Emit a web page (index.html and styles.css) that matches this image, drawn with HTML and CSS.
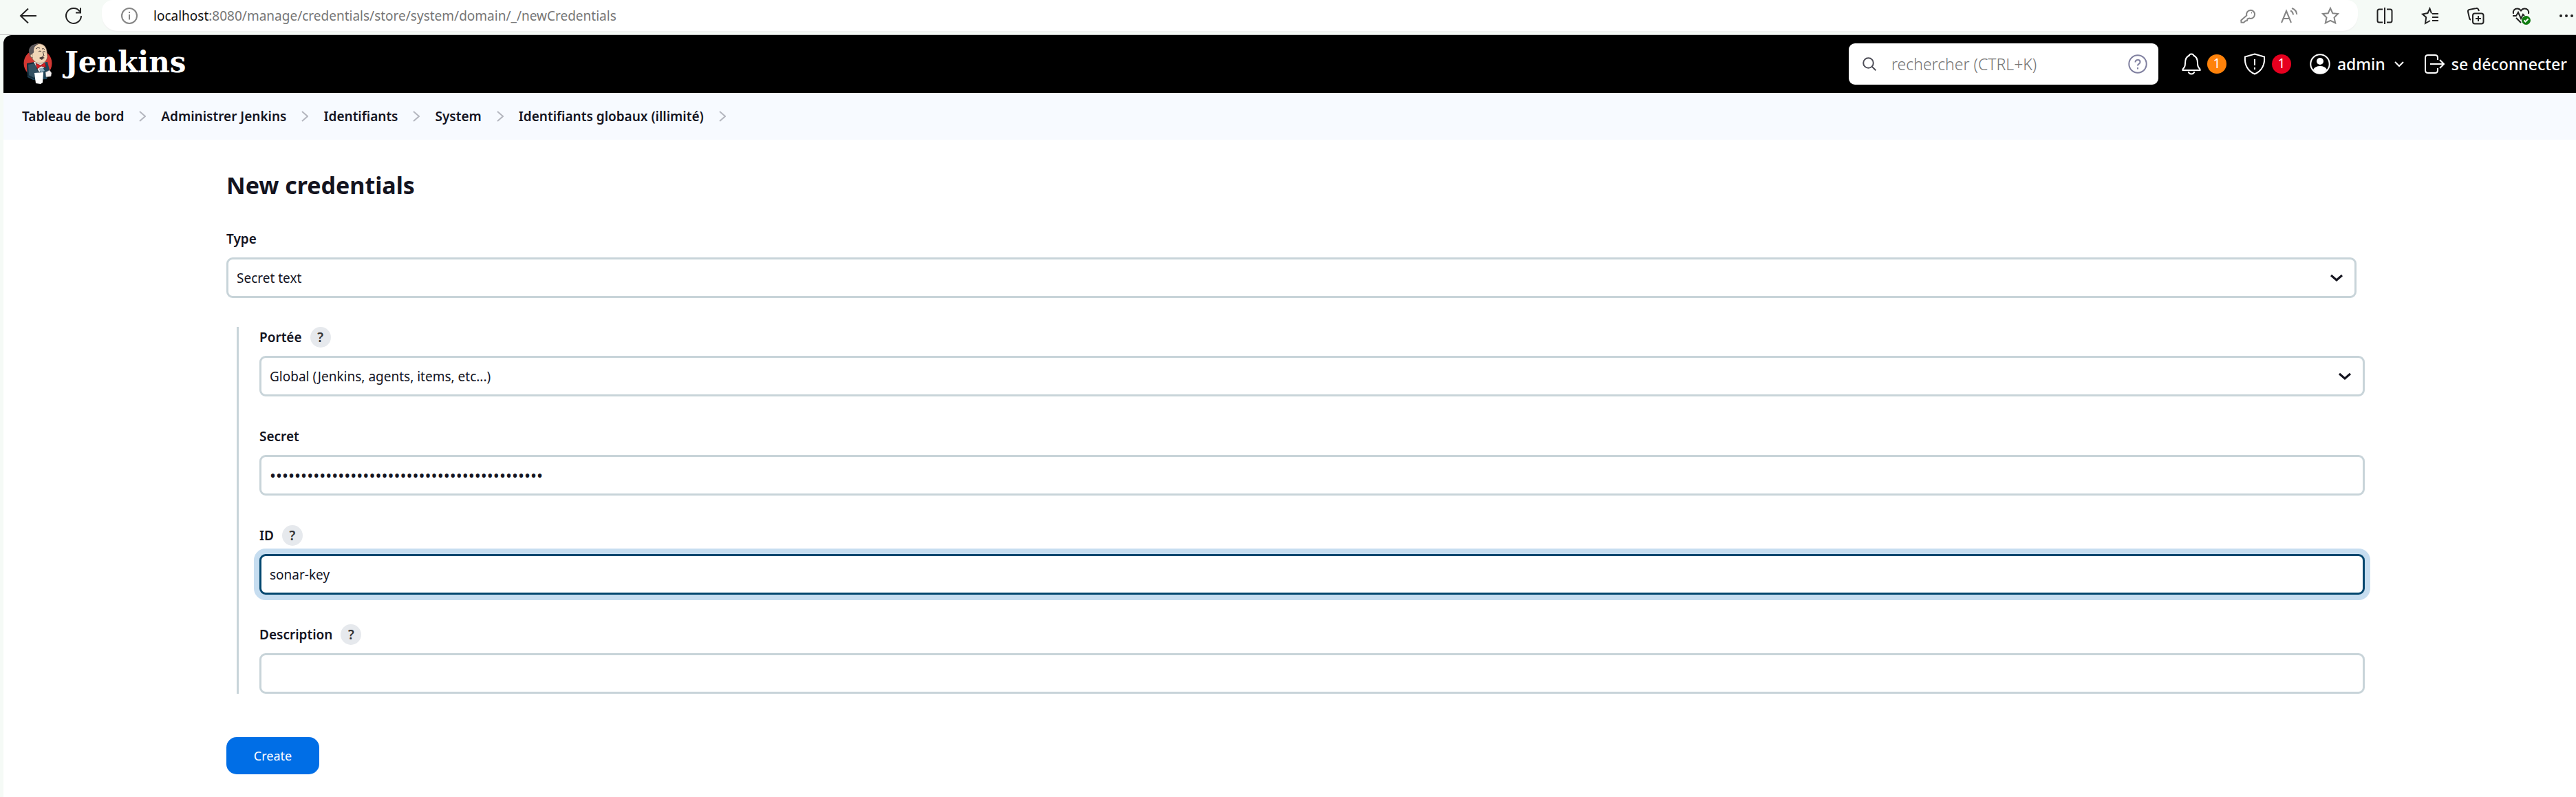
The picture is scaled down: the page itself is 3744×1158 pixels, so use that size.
FILE: index.html
```html
<!DOCTYPE html>
<html lang="fr">
<head>
<meta charset="utf-8">
<title>New credentials [Jenkins]</title>
<meta name="viewport" content="width=device-width, initial-scale=1">
<link rel="stylesheet" href="styles.css">
</head>
<body>
<div class="toolbar">
  <div class="toolbar-nav">
    <button class="tool" type="button" aria-label="Back"><svg viewBox="0 0 24 24"><path d="M24 12H1M12 1.500L1 12l11 10.500"/></svg></button>
    <button class="tool" type="button" aria-label="Refresh"><svg viewBox="0 0 24 24"><path d="M23 12A11 11 0 1 1 21 5.600M22 .5v7h-7"/></svg></button>
  </div>
  <div class="address">
    <button class="tool muted" type="button" aria-label="Site information"><svg viewBox="0 0 24 24"><circle cx="12" cy="12" r="11"/><path d="M12 10v7.500M12 6v2" stroke-width="2"/></svg></button>
    <div class="url"><span class="host">localhost</span>:8080/manage/credentials/store/system/domain/_/newCredentials</div>
    <div class="address-tools">
      <button class="tool muted" type="button" aria-label="Passwords"><svg viewBox="0 0 24 24"><path d="M10.300 11.500A6 6 0 1 1 14 15.500L11.500 16.500 11 19 8.500 19.500 6 21.800 2.500 21.500 2.300 18.500ZM17 7.500h1"/></svg></button>
      <button class="tool muted" type="button" aria-label="Read aloud"><svg viewBox="0 0 24 24"><path d="M1 22L8 5l7 17M3.500 16h9M14 4.500q3.500 1.500 4 6M16 1q6.500 2 7.300 9"/></svg></button>
      <button class="tool muted" type="button" aria-label="Add to favorites"><svg viewBox="0 0 24 24"><path d="M12 1l3.300 7.200 7.700.8-5.500 5.500 1.700 8L12 18.800 4.800 22.500l1.700-8L1 9l7.700-.8Z"/></svg></button>
    </div>
  </div>
  <div class="toolbar-actions">
    <button class="tool" type="button" aria-label="Split screen"><svg viewBox="0 0 24 24"><path d="M9 2.500H4Q1.500 2.500 1.500 5v14Q1.500 21.500 4 21.500h5M15 2.500h5q2.500 0 2.500 2.500v14q0 2.500-2.500 2.500h-5M12 0v24" /></svg></button>
    <button class="tool" type="button" aria-label="Favorites"><svg viewBox="0 0 24 24"><path d="M14 8.500L11.500 1.500 8.500 8 1 9.500 6.200 14.200 5 23l7-4M15 9h9M15 14h9M15 19h9"/></svg></button>
    <button class="tool" type="button" aria-label="Collections"><svg viewBox="0 0 24 24"><rect x="8" y="8.500" width="15.500" height="15" rx="3"/><path d="M16 12v8M12 16h8M17 5L16 2.500Q15 .5 13 1L3 3Q.5 3.500 1 6l2 9Q3.500 17.500 5 17.500"/></svg></button>
    <button class="tool" type="button" aria-label="Browser essentials"><svg viewBox="0 0 24 24"><path d="M1 9C0 4 3 1.500 6.500 1.500 9.500 1.500 11 3 12 4.500 13 3 14.500 1.500 17.500 1.500 21 1.500 24 4 23 9M0 12h5l3-5 4 9 3-6 2 2M5 15l7 7"/><circle class="ok" cx="19.500" cy="18.500" r="6.500"/><path class="tick" d="M16.500 18.500l2 2 4-4"/></svg></button>
    <button class="tool" type="button" aria-label="Settings and more"><svg viewBox="0 0 24 24"><g fill="#222" stroke="none"><circle cx="4" cy="12" r="2"/><circle cx="12" cy="12" r="2"/><circle cx="20" cy="12" r="2"/></g></svg></button>
  </div>
</div>

<div class="page">
  <header class="header">
    <a class="brand" href="#">
      <svg class="butler" viewBox="0 0 42 60" aria-hidden="true">
        <ellipse cx="21" cy="29" rx="20.500" ry="20" fill="#d33833"/>
        <path d="M5 31l8-3 22-1 3 12-4 13-20 1-8-4Z" fill="#1f4459"/>
        <path d="M6 30L17 28l8 20-10 3-8-4Z" fill="#335061" stroke="#152c3a"/>
        <path d="M15 27L31 24l1 9-9 9Z" fill="#f4f0ec"/>
        <path d="M10 8C14 0 25-2 31 4c4 5 3 10 4 15-1 7-5 10-11 10-5 0-9-3-11-7-3-3-5-9-3-14Z" fill="#f0d6b7" stroke="#6a5146" stroke-width=".7"/>
        <path d="M22 1C12 0 7 6 8 13l2 7 4 1-1-6q3-1 2-5 0-6 7-9Z" fill="#5a5558"/>
        <path d="M13 16q-3-1-3 2 1 3 4 3" fill="#f0d6b7" stroke="#6a5146" stroke-width=".7"/>
        <path d="M18 8q3-3 6-1M27 8q3-1 4 1M22 12q2-2 4 0M29 12q2-1 3 1M28 12l2 6-3 1" fill="none" stroke="#3c3030" stroke-width="1"/>
        <path d="M23 21q4-3 8 0-3 1-4 3-3-1-4-3Z" fill="#4b3a36"/>
        <path d="M18 29l7 3 6-4 2 7-7-2-6 4Z" fill="#d71f26" stroke="#6d1013" stroke-width=".7"/>
        <path d="M22 37l6-2 3 5-5 2Z" fill="#8faebf"/>
        <path d="M32 42l6-3 3 4-1 5-7 1Z" fill="#f3efef" stroke="#777" stroke-width=".6"/>
        <path d="M16 43l13-1-1 15-3 2-7-1Z" fill="#fff"/>
      </svg>
      <span>Jenkins</span>
    </a>
    <div class="search">
      <svg class="search-icon" viewBox="0 0 20 20" aria-hidden="true"><circle cx="8.500" cy="8.500" r="7.300"/><path d="M14 14l5.300 5.300"/></svg>
      <input type="search" placeholder="rechercher (CTRL+K)" aria-label="rechercher">
      <a class="search-help" href="#" aria-label="Aide"><svg viewBox="0 0 28 28"><circle cx="14" cy="14" r="12.700"/><path d="M10.500 11.500q0-3.500 3.700-3.500 3.300 0 3.300 3 0 2-2 3-1.500.8-1.500 2.500M14 19v2.500"/></svg></a>
    </div>
    <div class="monitors">
      <a class="monitor" href="#" aria-label="Notifications"><svg class="bell" viewBox="0 0 28 32"><path d="M14 1.500q3 0 3 2c5 2 6 6 6 11 0 5 1 6 3.500 9v1.500H1.500V23.500C4 20.500 5 19.500 5 14.500c0-5 1-9 6-11q0-2 3-2ZM9.500 27q1 3.500 4.500 3.500t4.500-3.500"/></svg><span class="badge orange">1</span></a>
      <a class="monitor" href="#" aria-label="Sécurité"><svg class="shield" viewBox="0 0 32 32"><path d="M16 1.500L30 5.500C31 16 27 26 16 30.500 5 26 1 16 2 5.500ZM16 9v9M16 21v3"/></svg><span class="badge red">1</span></a>
    </div>
    <a class="account" href="#"><svg class="avatar" viewBox="0 0 30 30"><circle cx="15" cy="15" r="13.700"/><g fill="#fff" stroke="none"><circle cx="15" cy="11" r="5"/><path d="M5 23q3-5 10-5t10 5q-4 5.500-10 5.500T5 23Z"/></g></svg><span>admin</span><svg class="caret" viewBox="0 0 16 10"><path d="M2 2l6 6 6-6"/></svg></a>
    <a class="logout" href="#"><svg viewBox="0 0 30 30"><path d="M20 9V6q0-4-4-4H6Q2 2 2 6v18q0 4 4 4h10q4 0 4-4v-3M9 15h19M23 9l6 6-6 6"/></svg><span>se déconnecter</span></a>
  </header>

  <nav class="breadcrumbs" aria-label="Fil d'Ariane">
    <a href="#">Tableau de bord</a><svg viewBox="0 0 10 16"><path d="M1 1l8 7-8 7"/></svg>
    <a href="#">Administrer Jenkins</a><svg viewBox="0 0 10 16"><path d="M1 1l8 7-8 7"/></svg>
    <a href="#">Identifiants</a><svg viewBox="0 0 10 16"><path d="M1 1l8 7-8 7"/></svg>
    <a href="#">System</a><svg viewBox="0 0 10 16"><path d="M1 1l8 7-8 7"/></svg>
    <a href="#">Identifiants globaux (illimité)</a><svg viewBox="0 0 10 16"><path d="M1 1l8 7-8 7"/></svg>
  </nav>

  <main class="content">
    <h1>New credentials</h1>
    <form>
      <div class="field">
        <div class="field-label"><label for="type">Type</label></div>
        <div class="select">
          <select id="type"><option>Secret text</option></select>
          <svg viewBox="0 0 18 10" aria-hidden="true"><path d="M1 1l8 7 8-7"/></svg>
        </div>
      </div>
      <div class="nested">
        <div class="field">
          <div class="field-label"><label for="scope">Portée</label><button class="help" type="button">?</button></div>
          <div class="select">
            <select id="scope"><option>Global (Jenkins, agents, items, etc...)</option></select>
            <svg viewBox="0 0 18 10" aria-hidden="true"><path d="M1 1l8 7 8-7"/></svg>
          </div>
        </div>
        <div class="field">
          <div class="field-label"><label for="secret">Secret</label></div>
          <input class="input" id="secret" type="password" value="squ_0a1b2c3d4e5f6a7b8c9d0e1f2a3b4c5d6e7f8a9b">
        </div>
        <div class="field">
          <div class="field-label"><label for="id">ID</label><button class="help" type="button">?</button></div>
          <input class="input active" id="id" type="text" value="sonar-key">
        </div>
        <div class="field">
          <div class="field-label"><label for="description">Description</label><button class="help" type="button">?</button></div>
          <input class="input" id="description" type="text">
        </div>
      </div>
      <button class="submit" type="submit">Create</button>
    </form>
  </main>
</div>
</body>
</html>
```
FILE: styles.css
```css
* {
  box-sizing: border-box;
}

body {
  margin: 0;
  min-height: 100vh;
  display: flex;
  flex-direction: column;
  background: #f5faf6;
  color: #14141f;
  font-family: "Noto Sans", "Open Sans", sans-serif;
  font-size: 19px;
  line-height: 30px;
}

a {
  color: inherit;
  text-decoration: none;
}

button,
input,
select {
  font: inherit;
  color: inherit;
}

svg {
  flex: none;
  fill: none;
  stroke: currentColor;
  stroke-width: 2;
}

/* Browser toolbar */

.toolbar {
  display: flex;
  align-items: flex-start;
  padding: 0 2px 5px 29px;
  border-bottom: 1px solid #bdbdbd;
}

.toolbar-nav,
.toolbar-actions,
.address-tools {
  display: flex;
  align-items: center;
  height: 45px;
}

.toolbar-nav {
  gap: 42px;
  margin-right: 29px;
}

.toolbar-actions {
  gap: 42px;
  margin-left: 27px;
}

.tool {
  width: 24px;
  height: 24px;
  padding: 0;
  border: 0;
  background: none;
  color: #222;
}

.tool svg {
  display: block;
  width: 24px;
  height: 24px;
  overflow: visible;
}

.muted {
  color: #858585;
}

.tool .ok {
  fill: #107c10;
  stroke: none;
}

.tool .tick {
  stroke: #fff;
}

.address {
  flex: 1;
  display: flex;
  align-items: center;
  height: 45px;
  padding: 0 28px;
  background: #fff;
  border-radius: 16px 16px 23px 23px;
  box-shadow: 0 2px 1px #f2f3f2;
}

.url {
  flex: 1;
  margin-left: 23px;
  color: #767676;
}

.host {
  color: #111;
}

.address-tools {
  gap: 36px;
}

/* Page frame */

.page {
  flex: 1;
  margin-left: 5px;
  background: #fff;
  border-radius: 12px 0 0 0;
  overflow: hidden;
}

.header {
  display: flex;
  align-items: center;
  height: 84px;
  padding: 0 13px 0 29px;
  background: #000;
  color: #fff;
  font-size: 23px;
  font-weight: 500;
}

.brand {
  display: flex;
  align-items: center;
  gap: 18px;
  margin-right: auto;
  font-family: "DejaVu Serif", serif;
  font-size: 42px;
  font-weight: 700;
}

.butler {
  width: 42px;
  height: 60px;
  stroke: none;
}

.brand span {
  line-height: 60px;
  padding-bottom: 5px;
}

.search {
  display: flex;
  align-items: center;
  width: 450px;
  height: 60px;
  margin-right: 34px;
  padding: 0 16px 0 20px;
  background: #fff;
  border-radius: 9px;
  color: #4d4d57;
}

.search-icon {
  width: 20px;
  height: 20px;
}

.search input {
  flex: 1;
  min-width: 0;
  margin: 0 8px 0 22px;
  padding: 0;
  border: 0;
  outline: 0;
  background: none;
  font-size: 23px;
  font-weight: 300;
}

.search input::placeholder {
  color: #757575;
}

.search-help {
  color: #8080a0;
}

.search-help svg {
  display: block;
  width: 28px;
  height: 28px;
}

.monitors {
  display: flex;
  gap: 25px;
  margin-right: 27px;
}

.monitor {
  display: flex;
  align-items: center;
  gap: 9px;
}

.bell {
  width: 28px;
  height: 32px;
}

.shield {
  width: 32px;
  height: 32px;
}

.badge {
  width: 28px;
  height: 28px;
  border-radius: 50%;
  font-size: 19px;
  font-weight: 400;
  line-height: 27px;
  text-align: center;
}

.orange {
  background: #ff820a;
}

.red {
  background: #e6001f;
}

.account,
.logout {
  display: flex;
  align-items: center;
  gap: 10px;
}

.account {
  margin-right: 28px;
}

.avatar,
.logout svg {
  width: 30px;
  height: 30px;
}

.caret {
  width: 16px;
  height: 10px;
  margin-left: 2px;
}

.breadcrumbs {
  display: flex;
  align-items: center;
  gap: 22px;
  height: 68px;
  padding-left: 27px;
  background: #f7faff;
  font-weight: 600;
}

.breadcrumbs svg {
  width: 10px;
  height: 16px;
  color: #b4b6bf;
}

/* Form */

.content {
  padding: 42px 319px 33px 324px;
}

h1 {
  margin: 0 0 39px;
  font-size: 34px;
  font-weight: 700;
  line-height: 48px;
}

.field-label {
  display: flex;
  align-items: center;
  gap: 12px;
  height: 30px;
  margin-bottom: 12px;
  font-weight: 600;
}

.help {
  width: 30px;
  height: 30px;
  padding: 0;
  border: 0;
  border-radius: 50%;
  background: #e6e9ed;
  color: #333;
  font-weight: 600;
}

.input,
.select select {
  display: block;
  width: 100%;
  height: 59px;
  padding: 0 12px;
  border: 3px solid #c8d4d9;
  border-radius: 9px;
  outline: 0;
  background: #fff;
  appearance: none;
}

.input[type="password"] {
  font-size: 24px;
}

.input.active {
  border-color: #00466e;
  box-shadow: 0 0 0 8px #c6ddf0;
}

.select {
  display: grid;
  align-items: center;
}

.select select,
.select svg {
  grid-area: 1 / 1;
}

.select svg {
  justify-self: end;
  width: 18px;
  height: 10px;
  margin-right: 20px;
  stroke-width: 3;
  overflow: visible;
  pointer-events: none;
}

.nested {
  display: flex;
  flex-direction: column;
  gap: 43px;
  margin: 42px -12px 63px 15px;
  padding-left: 30px;
  border-left: 3px solid #c8d4d9;
}

.submit {
  min-width: 135px;
  height: 54px;
  padding: 0 36px;
  border: 0;
  border-radius: 15px;
  background: #006ee6;
  color: #fff;
  font-size: 18px;
}
```
